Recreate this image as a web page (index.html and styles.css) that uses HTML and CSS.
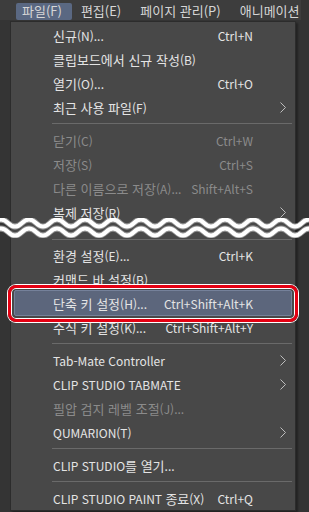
FILE: index.html
```html
<!DOCTYPE html>
<html lang="ko">
<head>
  <meta charset="UTF-8">
  <title>파일 메뉴</title>
  <link rel="stylesheet" href="styles.css">
</head>
<body>

  <div class="menubar">
    <span class="bar-item active">파일(F)</span>
    <span class="bar-item">편집(E)</span>
    <span class="bar-item">페이지 관리(P)</span>
    <span class="bar-item">애니메이션</span>
  </div>

  <div class="menu">
    <div class="row"><span><span class="ko">신규</span>(N)...</span><span class="key">Ctrl+N</span></div>
    <div class="row"><span><span class="ko">클립보드에서 신규 작성</span>(B)</span></div>
    <div class="row"><span><span class="ko">열기</span>(O)...</span><span class="key">Ctrl+O</span></div>
    <div class="row"><span><span class="ko">최근 사용 파일</span>(F)</span><span></span><span class="arrow"><svg width="6" height="11" viewBox="0 0 6 11"><path d="M0.5 0.5 L5.5 5.5 L0.5 10.5" fill="none" stroke="#bdbdbd" stroke-width="1"/></svg></span></div>
    <div class="sep"></div>
    <div class="row off"><span><span class="ko">닫기</span>(C)</span><span class="key">Ctrl+W</span></div>
    <div class="row off"><span><span class="ko">저장</span>(S)</span><span class="key">Ctrl+S</span></div>
    <div class="row off"><span><span class="ko">다른 이름으로 저장</span>(A)...</span><span class="key">Shift+Alt+S</span></div>
    <div class="row"><span><span class="ko">복제 저장</span>(R)</span><span></span><span class="arrow"><svg width="6" height="11" viewBox="0 0 6 11"><path d="M0.5 0.5 L5.5 5.5 L0.5 10.5" fill="none" stroke="#bdbdbd" stroke-width="1"/></svg></span></div>

    <div class="cut">
      <svg width="309" height="20" viewBox="0 0 309 20">
        <path class="wave-edge" d="M-6 5 q7 -7 14 0 t14 0 t14 0 t14 0 t14 0 t14 0 t14 0 t14 0 t14 0 t14 0 t14 0 t14 0 t14 0 t14 0 t14 0 t14 0 t14 0 t14 0 t14 0 t14 0 t14 0 t14 0 t14 0 t14 0"/>
        <path class="wave-fill" d="M-6 5 q7 -7 14 0 t14 0 t14 0 t14 0 t14 0 t14 0 t14 0 t14 0 t14 0 t14 0 t14 0 t14 0 t14 0 t14 0 t14 0 t14 0 t14 0 t14 0 t14 0 t14 0 t14 0 t14 0 t14 0 t14 0"/>
        <path class="wave-edge" d="M-6 14 q7 -7 14 0 t14 0 t14 0 t14 0 t14 0 t14 0 t14 0 t14 0 t14 0 t14 0 t14 0 t14 0 t14 0 t14 0 t14 0 t14 0 t14 0 t14 0 t14 0 t14 0 t14 0 t14 0 t14 0 t14 0"/>
        <path class="wave-fill" d="M-6 14 q7 -7 14 0 t14 0 t14 0 t14 0 t14 0 t14 0 t14 0 t14 0 t14 0 t14 0 t14 0 t14 0 t14 0 t14 0 t14 0 t14 0 t14 0 t14 0 t14 0 t14 0 t14 0 t14 0 t14 0 t14 0"/>
      </svg>
    </div>
    <div class="sep short"></div>

    <div class="row"><span><span class="ko">환경 설정</span>(E)...</span><span class="key">Ctrl+K</span></div>
    <div class="row"><span><span class="ko">커맨드 바 설정</span>(B)</span></div>
    <div class="row hover">
      <span><span class="ko">단축 키 설정</span>(H)...</span><span class="key">Ctrl+Shift+Alt+K</span>
      <div class="callout"></div>
    </div>
    <div class="row"><span><span class="ko">수식 키 설정</span>(K)...</span><span class="key">Ctrl+Shift+Alt+Y</span></div>
    <div class="sep"></div>
    <div class="row"><span>Tab-Mate Controller</span><span></span><span class="arrow"><svg width="6" height="11" viewBox="0 0 6 11"><path d="M0.5 0.5 L5.5 5.5 L0.5 10.5" fill="none" stroke="#bdbdbd" stroke-width="1"/></svg></span></div>
    <div class="row"><span>CLIP STUDIO TABMATE</span><span></span><span class="arrow"><svg width="6" height="11" viewBox="0 0 6 11"><path d="M0.5 0.5 L5.5 5.5 L0.5 10.5" fill="none" stroke="#bdbdbd" stroke-width="1"/></svg></span></div>
    <div class="row off"><span><span class="ko">필압 검지 레벨 조절</span>(J)...</span></div>
    <div class="row"><span>QUMARION(T)</span><span></span><span class="arrow"><svg width="6" height="11" viewBox="0 0 6 11"><path d="M0.5 0.5 L5.5 5.5 L0.5 10.5" fill="none" stroke="#bdbdbd" stroke-width="1"/></svg></span></div>
    <div class="sep"></div>
    <div class="row"><span>CLIP STUDIO<span class="ko">를 열기</span>...</span></div>
    <div class="sep"></div>
    <div class="row"><span>CLIP STUDIO PAINT <span class="ko">종료</span>(X)</span><span class="key">Ctrl+Q</span></div>
  </div>

</body>
</html>
```

FILE: styles.css
```css
body {
  margin: 0;
  width: 309px;
  height: 512px;
  overflow: hidden;
  background: #343434;
  font-family: "Noto Sans CJK KR", "Noto Sans", sans-serif;
  font-size: 12px;
}

.menubar {
  display: flex;
  width: 301px;
  height: 20px;
  overflow: hidden;
  white-space: nowrap;
  background: #3d3d3d;
  font-size: 13px;
}

.bar-item {
  flex: none;
  margin-left: 3px;
  padding: 0 10px 0 6px;
  margin-top: 3px;
  height: 17px;
  line-height: 16px;
  color: #d6d6d6;
  border-radius: 2px;
}

.bar-item:first-child {
  margin-left: 16px;
}

.bar-item.active {
  background: #5a6882;
}

.menu {
  position: relative;
  width: 284px;
  margin: 1px 0 0 10px;
  padding: 1px 0 0;
  background: #484848;
  border: 1px solid #2c2c2c;
  box-shadow: 2px 2px 2px rgba(0, 0, 0, 0.35);
}

.row {
  position: relative;
  display: grid;
  grid-template-columns: 1fr auto 38px;
  align-items: center;
  margin: 0 3px;
  padding-left: 38px;
  height: 22px;
  border: 1px solid transparent;
  border-radius: 2px;
  color: #e4e4e4;
  white-space: nowrap;
}

.ko {
  font-size: 13px;
}

.row.off {
  color: #8b8b8b;
}

.row.hover {
  background: #5c667c;
  border-color: #75819a;
  height: 24px;
  margin-top: -1px;
  margin-bottom: -1px;
}

.key {
  text-align: right;
}

.arrow {
  display: flex;
  margin-left: 27px;
}

.sep {
  height: 9px;
  margin: 0 3px 0 41px;
  background: linear-gradient(#6a6a6a, #6a6a6a) 0 4px / 100% 1px no-repeat;
}

.sep.short {
  height: 5px;
  background-position: 0 1px;
}

.cut {
  height: 20px;
  margin: -6px 0 0 -11px;
  width: 309px;
}

.cut svg {
  display: block;
}

.wave-edge {
  fill: none;
  stroke: #8e8e8e;
  stroke-width: 6;
}

.wave-fill {
  fill: none;
  stroke: #ffffff;
  stroke-width: 4;
}

.callout {
  position: absolute;
  left: -7px;
  right: -7px;
  top: -6px;
  bottom: -7px;
  border: 3px solid #e50012;
  border-radius: 8px;
  box-shadow: 0 0 0 1px #ffffff, inset 0 0 0 1px #ffffff;
}
```
